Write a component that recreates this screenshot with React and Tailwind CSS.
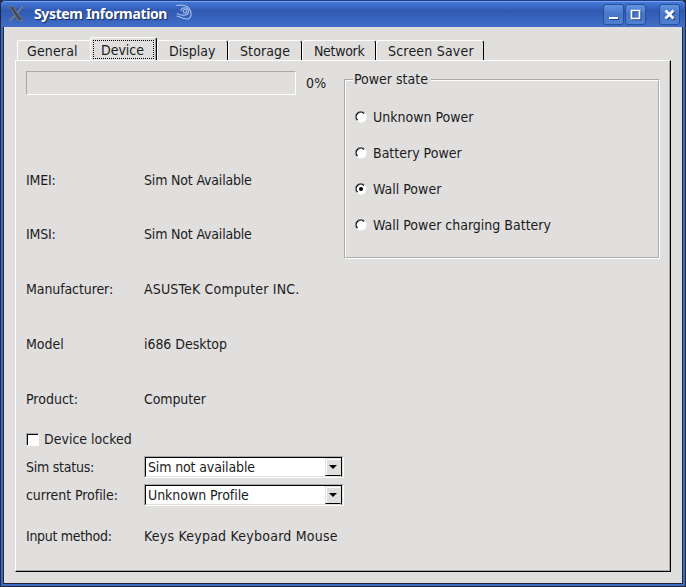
import React from "react";

const TABS = [
  { label: "General", cls: "w-[74px] pl-[9px] tracking-[0.15px]" },
  { label: "Device", cls: "-ml-[1px] w-[67px]", active: true },
  { label: "Display", cls: "w-[71px] pl-[11px]" },
  { label: "Storage", cls: "w-[74px] pl-[11px] tracking-[0.1px]" },
  { label: "Network", cls: "w-[74px] pl-[11px] tracking-[-0.3px]" },
  { label: "Screen Saver", cls: "w-[108px] pl-[11px] tracking-[0.2px]" },
];

function Tab({ label, cls, active }) {
  if (active) {
    return (
      <div className={`${cls} relative z-10 flex h-[23px] rounded-t-[3px] border-t border-l border-white border-r border-r-black bg-[#e0dfde] px-[2px] pt-[2px] shadow-[inset_-1px_0_0_#aaa]`}>
        <div className="flex h-[19px] w-[61px] items-center justify-center border border-dotted border-black pr-[2px]">
          {label}
        </div>
      </div>
    );
  }
  return (
    <div className={`${cls} flex h-[20px] items-center rounded-t-[3px] border-t border-l border-white ${label === "General" ? "" : "border-r border-r-black"}`}>
      {label}
    </div>
  );
}

function TitleButton({ children, cls = "" }) {
  return (
    <div className={`${cls} h-[21px] w-[21px] rounded-[3px] border border-[#274f9c] bg-linear-to-b from-[#6493e0] via-[#4775c8] to-[#4f80d0]`}>
      <svg viewBox="0 0 19 19" className="h-[19px] w-[19px]" fill="none">
        <g transform="translate(1 1)" stroke="#20417f" strokeWidth="2">{children}</g>
        <g stroke="#fff" strokeWidth="2">{children}</g>
      </svg>
    </div>
  );
}

function TitleBar() {
  return (
    <div className="flex h-[27px] shrink-0 items-start rounded-t-[5px] bg-linear-to-b from-[#4a7fe0] from-0% via-[#3159b2] via-40% to-[#416fc8] pl-[7px] pr-[5px] pt-[4px] shadow-[inset_0_1px_0_#1d3c80,inset_0_2px_0_#75a2f2]">
      <svg viewBox="0 0 16 18" className="mt-[1px] h-[18px] w-[16px]">
        <path d="M1 1.5H5L15 15.5H10.5Z" fill="#464b58" stroke="#6f7480" strokeWidth="1" />
        <path d="M15 1L9.2 8M7 10.5L1.5 16" stroke="#777b83" strokeWidth="1.8" fill="none" />
      </svg>
      <span className="ml-[10px] w-[134px] whitespace-nowrap font-['Noto_Sans'] text-[14px] leading-[20px] font-bold tracking-[-0.36px] text-white [text-shadow:1px_1px_1px_#142c60]">
        System Information
      </span>
      <svg viewBox="0 0 19 18" className="ml-[6px] h-[18px] w-[19px]" fill="none" stroke="#a3bbe6" strokeWidth="1.2">
        <path d="M2 1.5C9 .5 15 2 16.5 7C18 12 16 15.5 12.5 15C8 14.5 7 13 2.5 12" />
        <path d="M7 7C7 2.5 14.5 3 14.5 7.5C14.5 12 7.5 12 3 9.5" />
        <circle cx="11" cy="7.2" r="1.7" />
      </svg>
      <div className="flex-1" />
      <TitleButton><path d="M5 13H14" /></TitleButton>
      <TitleButton cls="ml-[1px]"><path d="M5.5 5.5H13.5V13.5H5.5Z" strokeWidth="1.7" /></TitleButton>
      <TitleButton cls="ml-[13px]"><path d="M5.5 5.5L13.5 13.5M13.5 5.5L5.5 13.5" strokeWidth="2.6" /></TitleButton>
    </div>
  );
}

function Radio({ label, checked }) {
  return (
    <div className="flex h-[36px] items-center">
      <svg viewBox="0 0 12 12" className="h-[12px] w-[12px]" fill="none">
        <circle cx="6" cy="6" r="5.6" fill="#fff" />
        <path d="M1.8 9.8A5.4 5.4 0 0 1 9.8 1.8" stroke="#aaa" />
        <path d="M2.5 9A4.5 4.5 0 0 1 9 2.5" stroke="#000" strokeWidth="1.2" />
        {checked && <circle cx="6" cy="6" r="2" fill="#000" />}
      </svg>
      <span className="ml-[6px]">{label}</span>
    </div>
  );
}

function Info({ label, value, cls, track = "", labelTrack = "" }) {
  return (
    <div className={`${cls} flex h-[20px] items-center`}>
      <span className={`w-[118px] ${labelTrack}`}>{label}</span>
      <span className={track}>{value}</span>
    </div>
  );
}

function Combo({ label, value, cls, track = "", labelTrack = "" }) {
  return (
    <div className={`${cls} flex h-[22px] items-center`}>
      <span className={`w-[118px] ${labelTrack}`}>{label}</span>
      <div className="h-[22px] w-[200px] border border-[#aaa] border-r-white border-b-white">
        <div className="mr-[1px] flex h-[20px] border border-black border-b-[#e0dfde] bg-white">
          <span className={`flex-1 pl-[2px] leading-[19px] ${track}`}>{value}</span>
          <div className="flex h-[18px] w-[16px] items-center justify-center border border-[#e0dfde] border-b-black bg-[#e0dfde] shadow-[inset_1px_1px_0_#fff]">
            <svg viewBox="0 0 8 4" className="h-[4px] w-[8px]"><path d="M0 0H8L4 4Z" /></svg>
          </div>
        </div>
      </div>
    </div>
  );
}

export default function App() {
  return (
    <div className="h-[587px] w-[686px] bg-[#252d3d]">
      <div className="flex h-[587px] flex-col rounded-t-[6px] border border-t-0 border-[#222838] bg-[#3d6cc5]">
        <TitleBar />
        <div className="mx-[2px] mb-[2px] flex-1 border border-t-0 border-[#222838] bg-[#e0dfde] pt-[11px] pl-[11px] font-['DejaVu_Sans_Condensed','DejaVu_Sans',sans-serif] text-[14px] leading-[18px] whitespace-nowrap text-[#1c1c1c]">
          <div className="flex h-[22px] items-end pl-[2px]">
            {TABS.map((t) => <Tab key={t.label} {...t} />)}
          </div>
          <div className="flex h-[512px] w-[656px] border border-white border-r-black border-b-black pl-[10px] pt-[10px] shadow-[inset_-1px_-1px_0_#aaa]">
            <div className="w-[318px]">
              <div className="flex">
                <div className="h-[24px] w-[270px] border border-[#aaa] border-r-white border-b-white" />
                <span className="ml-[10px] leading-[25px] tracking-[0.2px]">0%</span>
              </div>
              <Info label="IMEI:" value="Sim Not Available" cls="mt-[74px]" track="tracking-[-0.18px]" labelTrack="tracking-[-0.2px]" />
              <Info label="IMSI:" value="Sim Not Available" cls="mt-[34px]" track="tracking-[-0.18px]" labelTrack="tracking-[-0.2px]" />
              <Info label="Manufacturer:" value="ASUSTeK Computer INC." cls="mt-[35px]" track="tracking-[0.18px]" labelTrack="tracking-[-0.1px]" />
              <Info label="Model" value="i686 Desktop" cls="mt-[35px]" track="tracking-[-0.05px]" />
              <Info label="Product:" value="Computer" cls="mt-[35px]" track="tracking-[-0.1px]" />
              <div className="mt-[20px] flex h-[20px] items-center">
                <div className="h-[13px] w-[13px] border border-[#aaa] border-r-white border-b-white">
                  <div className="h-[11px] w-[11px] border-t border-l border-black bg-white" />
                </div>
                <span className="ml-[5px]">Device locked</span>
              </div>
              <Combo label="Sim status:" value="Sim not available" cls="mt-[7px]" track="tracking-[-0.14px]" labelTrack="tracking-[-0.25px]" />
              <Combo label="current Profile:" value="Unknown Profile" cls="mt-[6px]" track="tracking-[-0.05px]" labelTrack="tracking-[-0.05px]" />
              <Info label="Input method:" value="Keys Keypad Keyboard Mouse" cls="mt-[20px]" track="tracking-[0.23px]" labelTrack="tracking-[-0.3px]" />
            </div>
            <div className="mt-[8px] h-[180px] w-[316px] border border-[#aaa] border-r-white border-b-white">
              <div className="h-[178px] border border-white border-r-[#aaa] border-b-[#aaa] pl-[9px]">
                <div className="-mt-[12px] -ml-[2px] h-[20px] w-[78px] bg-[#e0dfde] pl-[1px] leading-[20px]">Power state</div>
                <div className="mt-[10px]">
                  <Radio label="Unknown Power" />
                  <Radio label="Battery Power" />
                  <Radio label="Wall Power" checked />
                  <Radio label="Wall Power charging Battery" />
                </div>
              </div>
            </div>
          </div>
        </div>
      </div>
    </div>
  );
}
